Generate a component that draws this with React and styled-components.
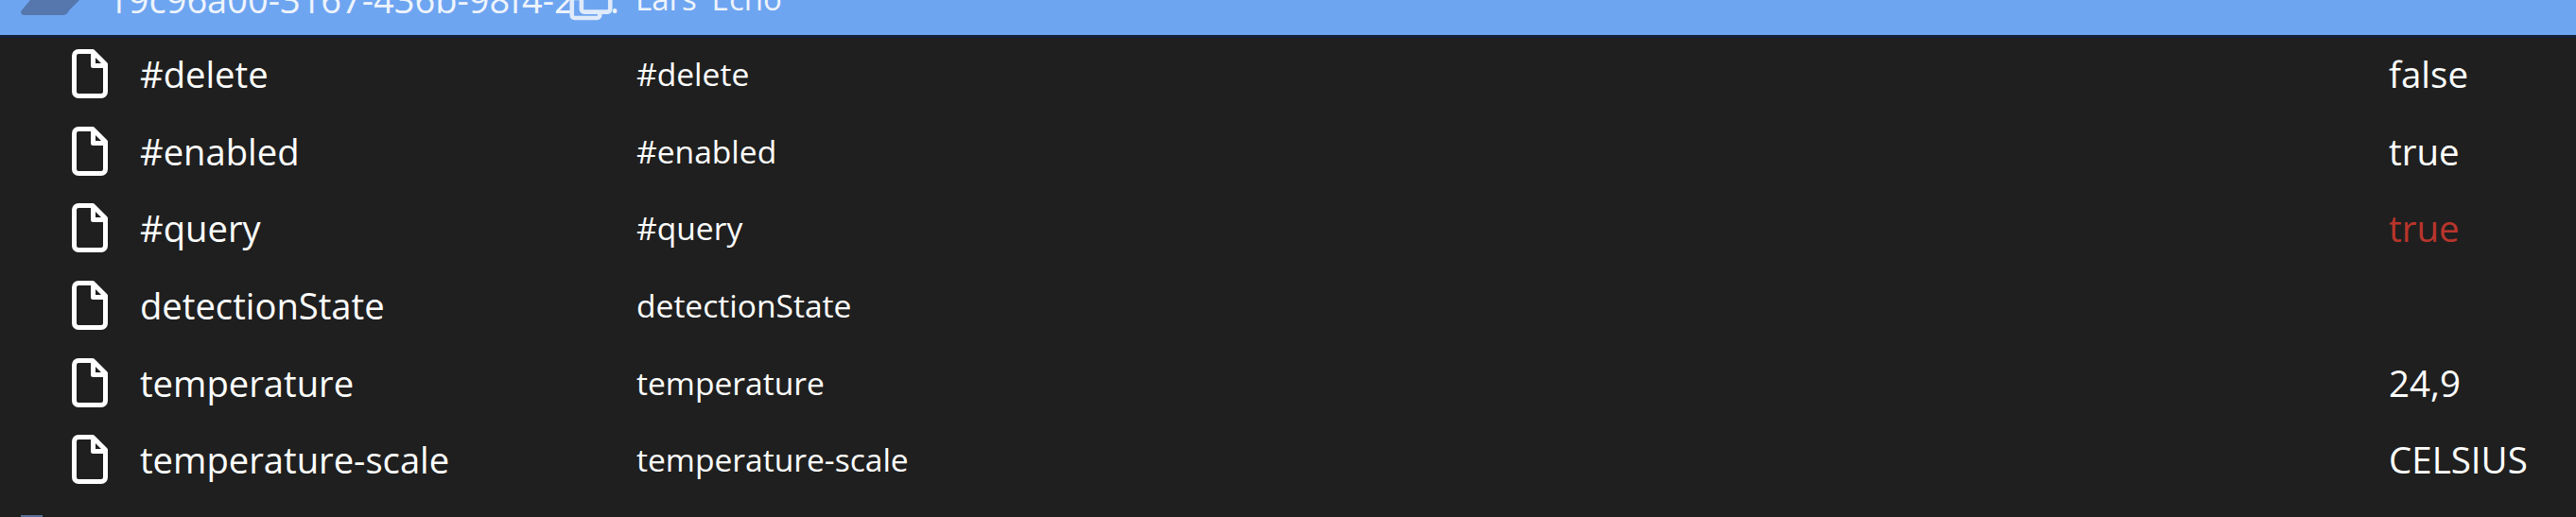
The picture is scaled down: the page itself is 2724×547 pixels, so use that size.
import React from "react";
import styled, { createGlobalStyle } from "styled-components";

const rows = [
  { name: "#delete", value: "false" },
  { name: "#enabled", value: "true" },
  { name: "#query", value: "true", bad: true },
  { name: "detectionState", value: "" },
  { name: "temperature", value: "24,9" },
  { name: "temperature-scale", value: "CELSIUS" },
];

function FileIcon() {
  return (
    <FileSvg viewBox="0 0 38 52">
      <path
        d="M7 2.5h15L35.5 16v29a4.5 4.5 0 0 1-4.5 4.5H7A4.5 4.5 0 0 1 2.5 45V7A4.5 4.5 0 0 1 7 2.5zM22.5 3v14.5h13"
        fill="none"
        stroke="#fff"
        strokeWidth="5"
        strokeLinejoin="round"
      />
    </FileSvg>
  );
}

export default function App() {
  return (
    <Page>
      <GlobalStyle />
      <Header>
        <FolderSvg viewBox="0 0 64 16">
          <path d="M12 0H64L53 11a7 7 0 0 1-6 5H6a4 4 0 0 1-4-4z" fill="#5577ad" />
        </FolderSvg>
        <HeaderId>
          19c96a00-3167-436b-98f4-2
          <CopySvg viewBox="0 0 50 50">
            <path
              d="M12 14H6a3 3 0 0 0-3 3v17a3 3 0 0 0 3 3h26a3 3 0 0 0 3-3v-4M14 3v24a3 3 0 0 0 3 3h27a3 3 0 0 0 3-3V3"
              fill="none"
              stroke="#dfeafb"
              strokeWidth="5"
            />
          </CopySvg>
        </HeaderId>
        <HeaderDot>.</HeaderDot>
        <HeaderTitle>Lars' Echo</HeaderTitle>
      </Header>
      <List>
        {rows.map((row) => (
          <Row key={row.name}>
            <FileIcon />
            <Name>{row.name}</Name>
            <Path>{row.name}</Path>
            <Value $bad={row.bad}>{row.value}</Value>
          </Row>
        ))}
        <NextRow>
          <NextIcon />
        </NextRow>
      </List>
    </Page>
  );
}

const GlobalStyle = createGlobalStyle`
  html, body {
    margin: 0;
    padding: 0;
    background: #1f1f1f;
    overflow: hidden;
  }
`;

const Page = styled.div`
  width: 2724px;
  height: 547px;
  overflow: hidden;
  background: #1f1f1f;
  color: #fff;
  font-family: "Open Sans", "Noto Sans", sans-serif;
`;

const Header = styled.div`
  display: flex;
  align-items: flex-end;
  height: 37px;
  overflow: hidden;
  padding-left: 20px;
  background: #6ea5f1;
  border-bottom: 3px solid #14213a;
  color: #eef4fd;
  font-size: 38px;
  line-height: 50px;
`;

const FolderSvg = styled.svg`
  width: 64px;
  height: 16px;
  flex: none;
  margin-bottom: 21px;
`;

const HeaderId = styled.div`
  position: relative;
  flex: none;
  width: 531px;
  margin-left: 30px;
  padding-bottom: 13px;
  white-space: nowrap;
`;

const CopySvg = styled.svg`
  position: absolute;
  left: 488px;
  bottom: 6px;
  width: 46px;
  height: 46px;
`;

const HeaderDot = styled.div`
  width: 27px;
  padding-bottom: 13px;
`;

const HeaderTitle = styled.div`
  font-size: 33px;
  padding-bottom: 13px;
  white-space: nowrap;
`;

const List = styled.div`
  display: flex;
  flex-direction: column;
  margin-top: -3px;
`;

const Row = styled.div`
  display: grid;
  grid-template-columns: 38px 559px 1853px 1fr;
  align-items: center;
  height: 81.7px;
  padding-left: 76px;
`;

const FileSvg = styled.svg`
  width: 38px;
  height: 52px;
`;

const Name = styled.div`
  margin-left: 34px;
  font-size: 38.2px;
  white-space: nowrap;
`;

const Path = styled.div`
  font-size: 33.6px;
  white-space: nowrap;
`;

const Value = styled.div`
  font-size: 38.5px;
  white-space: nowrap;
  color: ${(p) => (p.$bad ? "#b8352c" : "#fff")};
`;

const NextRow = styled.div`
  padding: 18px 0 0 22px;
`;

const NextIcon = styled.div`
  width: 23px;
  height: 20px;
  background: #5a6f98;
`;
